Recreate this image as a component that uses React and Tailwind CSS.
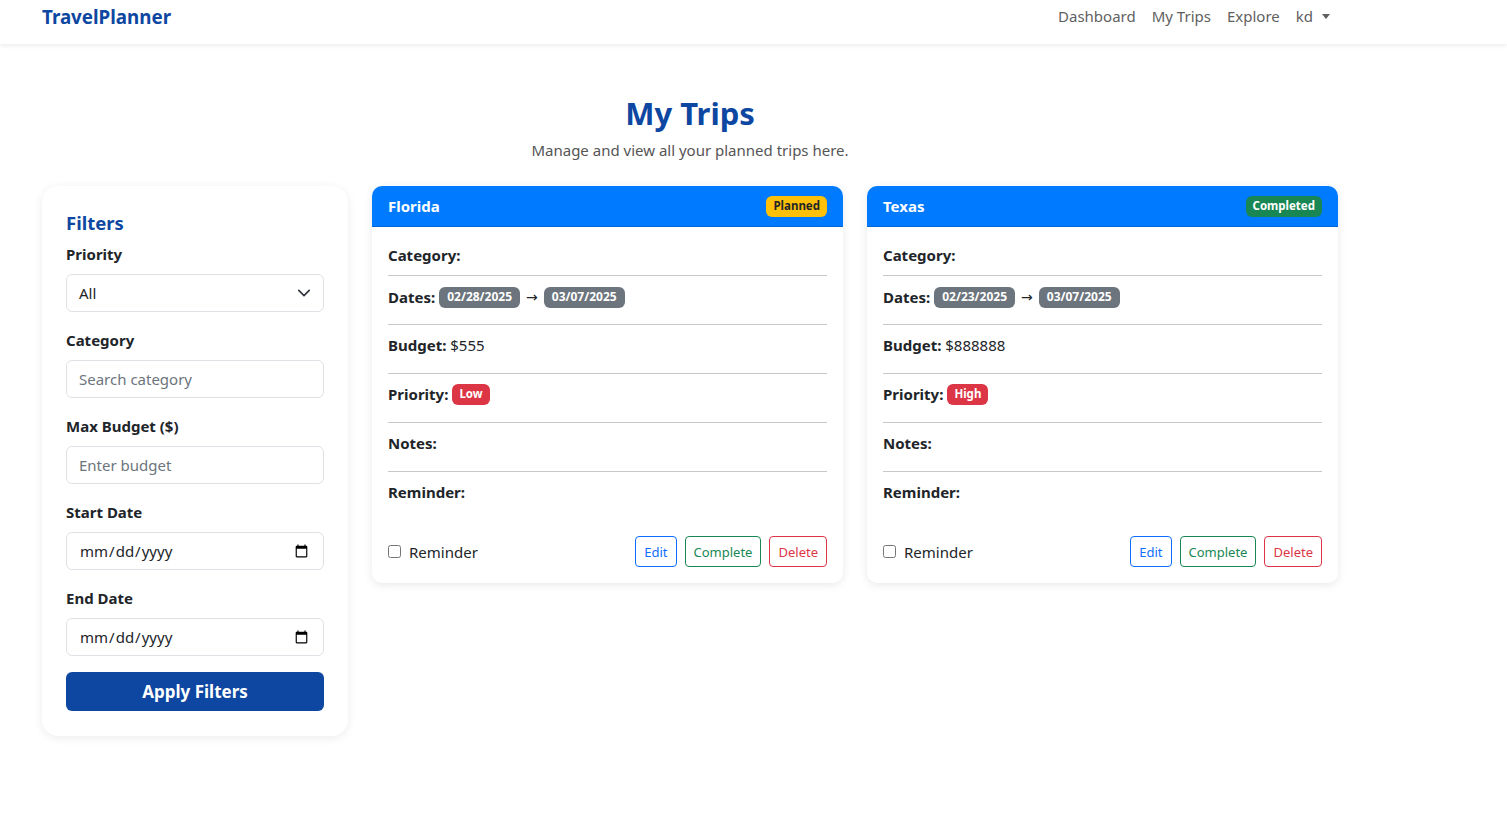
import React from "react";

function Badge({ children, className }) {
  return (
    <span className={"inline-flex items-center rounded-[6px] h-[21px] font-bold leading-none " + className}>
      {children}
    </span>
  );
}

function Field({ label, children }) {
  return (
    <div className="mb-4">
      <div className="text-[15px] font-bold leading-6 mb-2 text-[#212529]">{label}</div>
      {children}
    </div>
  );
}

function TextInput({ placeholder }) {
  return (
    <input
      placeholder={placeholder}
      className="w-full h-[38px] rounded-[6px] border border-[#dee2e6] px-3 text-[15px] text-[#212529] placeholder:text-[#6c757d] outline-none bg-white"
    />
  );
}

function DateInput() {
  return (
    <input
      type="date"
      className="w-full h-[38px] rounded-[6px] border border-[#dee2e6] px-3 text-[15px] text-[#212529] outline-none bg-white"
    />
  );
}

function TripCard({ name, status, statusClass, start, end, budget, priority }) {
  return (
    <div className="w-[471px] rounded-[10px] bg-white shadow-[0_2px_10px_rgba(0,0,0,0.09)] overflow-hidden">
      <div className="h-[41px] bg-[#007bff] flex items-center justify-between px-4 border-b border-[#0066d6]">
        <span className="text-white font-bold text-[15px]">{name}</span>
        <Badge className={"px-[7px] text-[11.5px] " + statusClass}>{status}</Badge>
      </div>
      <div className="px-4 pt-4 pb-4 text-[15px] leading-6">
        <div className="pb-2 border-b border-[#c8c8c8]">
          <span className="font-bold">Category:</span>
        </div>
        <div className="pt-[9px] pb-[15px] border-b border-[#c8c8c8] flex items-center">
          <span className="font-bold mr-1">Dates:</span>
          <Badge className="px-[8px] text-[12px] bg-[#6c757d] text-white">{start}</Badge>
          <span className="mx-[6px] font-['DejaVu_Sans',sans-serif] text-[14px] leading-none">→</span>
          <Badge className="px-[8px] text-[12px] bg-[#6c757d] text-white">{end}</Badge>
        </div>
        <div className="pt-2 pb-4 border-b border-[#c8c8c8]">
          <span className="font-bold">Budget:</span> {budget}
        </div>
        <div className="pt-2 pb-4 border-b border-[#c8c8c8] flex items-center">
          <span className="font-bold mr-1">Priority:</span>
          <Badge className="px-[7px] text-[11.5px] bg-[#dc3545] text-white">{priority}</Badge>
        </div>
        <div className="pt-2 pb-4 border-b border-[#c8c8c8]">
          <span className="font-bold">Notes:</span>
        </div>
        <div className="pt-2 pb-4">
          <span className="font-bold">Reminder:</span>
        </div>
        <div className="mt-4 flex items-center justify-between">
          <label className="flex items-center gap-2 text-[15px]">
            <input type="checkbox" className="w-[13px] h-[13px] m-0" />
            <span>Reminder</span>
          </label>
          <div className="flex gap-2">
            <button className="h-[31px] px-2 text-[13px] rounded-[4px] border border-[#0d6efd] text-[#0d6efd] bg-white">Edit</button>
            <button className="h-[31px] px-2 text-[13px] rounded-[4px] border border-[#198754] text-[#198754] bg-white">Complete</button>
            <button className="h-[31px] px-2 text-[13px] rounded-[4px] border border-[#dc3545] text-[#dc3545] bg-white">Delete</button>
          </div>
        </div>
      </div>
    </div>
  );
}

export default function App() {
  return (
    <div className="min-h-screen bg-white font-['Noto_Sans',sans-serif] text-[#212529]">
      <nav className="h-[44px] bg-white shadow-[0_2px_4px_rgba(0,0,0,0.07)]">
        <div className="flex items-start justify-between pl-[42px] pr-[177px] pt-[4px]">
          <span className="text-[18.75px] font-bold text-[#0d47a1] leading-[26px]">TravelPlanner</span>
          <div className="flex items-center gap-4 text-[15px] text-[#5f5f5f] leading-6">
            <span>Dashboard</span>
            <span>My Trips</span>
            <span>Explore</span>
            <span className="flex items-center gap-[9px]">
              kd
              <span className="w-0 h-0 border-l-[4px] border-r-[4px] border-t-[5px] border-l-transparent border-r-transparent border-t-[#5f5f5f]" />
            </span>
          </div>
        </div>
      </nav>

      <main className="ml-[42px] w-[1296px] pb-20">
        <div className="text-center pt-[50px]">
          <h1 className="text-[31px] font-bold text-[#0d47a1] leading-[38px]">My Trips</h1>
          <p className="mt-[6px] text-[15px] text-[#555] leading-6">Manage and view all your planned trips here.</p>
        </div>

        <div className="mt-6 flex items-start gap-6">
          <aside className="w-[306px] shrink-0 rounded-[16px] bg-white shadow-[0_2px_10px_rgba(0,0,0,0.08)] px-6 pt-[25px] pb-[25px]">
            <h2 className="text-[18.5px] font-bold text-[#0d47a1] leading-6 mb-[7px]">Filters</h2>
            <Field label="Priority">
              <div className="relative h-[38px] rounded-[6px] border border-[#dee2e6] px-3 flex items-center justify-between text-[15px]">
                <span>All</span>
                <svg width="14" height="14" viewBox="0 0 16 16" fill="none" stroke="#343a40" strokeWidth="2" strokeLinecap="round" strokeLinejoin="round">
                  <path d="M2 5l6 6 6-6" />
                </svg>
              </div>
            </Field>
            <Field label="Category">
              <TextInput placeholder="Search category" />
            </Field>
            <Field label="Max Budget ($)">
              <TextInput placeholder="Enter budget" />
            </Field>
            <Field label="Start Date">
              <DateInput />
            </Field>
            <Field label="End Date">
              <DateInput />
            </Field>
            <button className="w-full h-[39px] rounded-[6px] bg-[#0d47a1] text-white text-[17px] font-bold">Apply Filters</button>
          </aside>

          <TripCard
            name="Florida"
            status="Planned"
            statusClass="bg-[#ffc107] text-[#212529]"
            start="02/28/2025"
            end="03/07/2025"
            budget="$555"
            priority="Low"
          />
          <TripCard
            name="Texas"
            status="Completed"
            statusClass="bg-[#198754] text-white"
            start="02/23/2025"
            end="03/07/2025"
            budget="$888888"
            priority="High"
          />
        </div>
      </main>
    </div>
  );
}
